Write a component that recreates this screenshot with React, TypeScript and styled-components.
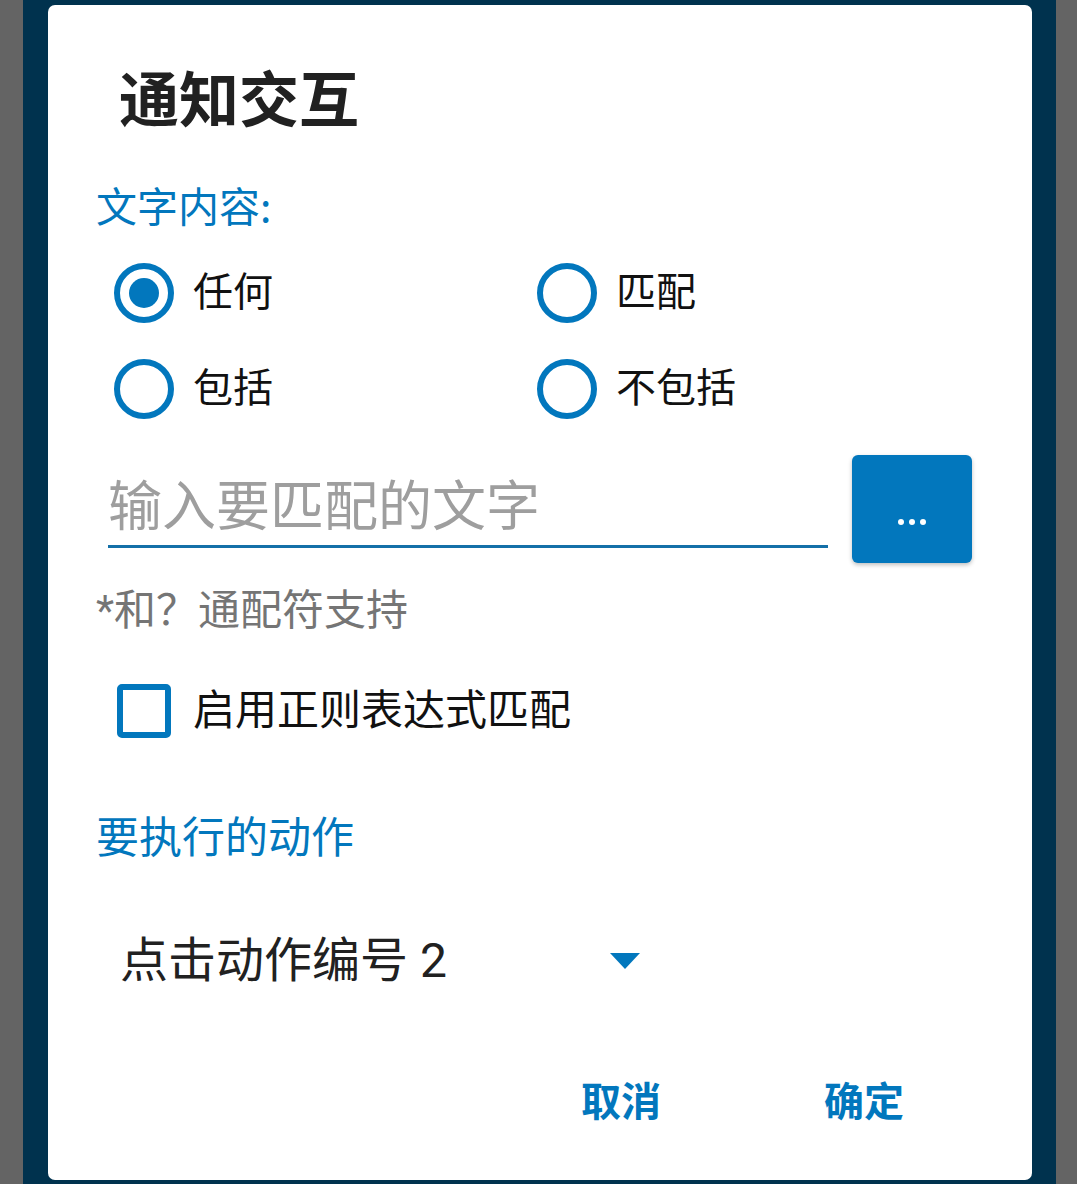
import React, { useState } from "react";
import styled, { createGlobalStyle } from "styled-components";

const GlobalStyle = createGlobalStyle`
  html, body { margin: 0; padding: 0; background: #646464; }
  body { font-family: Roboto, "Noto Sans CJK SC", sans-serif; }
  * { box-sizing: border-box; }
`;

const BLUE = "#0277bd";

const Page = styled.div`
  width: 1077px;
  height: 1184px;
  background: #646464;
  padding-left: 23px;
  overflow: hidden;
`;

const Scrim = styled.div`
  width: 1033px;
  height: 1184px;
  background: #00324e;
  padding: 5px 0 0 25px;
`;

const Dialog = styled.div`
  width: 984px;
  height: 1175px;
  background: #ffffff;
  border-radius: 7px;
  display: flex;
  flex-direction: column;
`;

const Title = styled.div`
  margin-top: 62px;
  padding-left: 71px;
  height: 70px;
  line-height: 70px;
  font-size: 60px;
  font-weight: 700;
  color: #212121;
`;

const SectionLabel = styled.div<{ $mt: number; $size: number }>`
  margin-top: ${(p) => p.$mt}px;
  padding-left: 48px;
  height: 50px;
  line-height: 50px;
  font-family: "Noto Sans CJK SC", sans-serif;
  font-size: ${(p) => p.$size}px;
  color: ${BLUE};
`;

const RadioGrid = styled.div`
  margin-top: 16px;
  padding-left: 66px;
  display: grid;
  grid-template-columns: 423px 423px;
  grid-auto-rows: 96px;
`;

const RadioItem = styled.label`
  display: flex;
  align-items: center;
  gap: 19px;
  cursor: pointer;
`;

const RadioCircle = styled.span<{ $on: boolean }>`
  width: 60px;
  height: 60px;
  border-radius: 50%;
  border: 6px solid ${BLUE};
  display: flex;
  align-items: center;
  justify-content: center;
  &::after {
    content: "";
    width: 30px;
    height: 30px;
    border-radius: 50%;
    background: ${BLUE};
    display: ${(p) => (p.$on ? "block" : "none")};
  }
`;

const OptionText = styled.span`
  font-size: 40px;
  line-height: 50px;
  color: #111111;
`;

const InputRow = styled.div`
  margin-top: 18px;
  padding: 0 60px;
  display: flex;
  align-items: flex-start;
  gap: 24px;
`;

const TextInput = styled.input`
  margin-top: 10px;
  flex: 1;
  height: 83px;
  border: none;
  border-bottom: 3px solid #1470a8;
  outline: none;
  padding: 4px 0 0 0;
  font-family: Roboto, "Noto Sans CJK SC", sans-serif;
  font-size: 54px;
  line-height: 76px;
  color: #212121;
  background: transparent;
  &::placeholder { color: #9e9e9e; }
`;

const MoreButton = styled.button`
  width: 120px;
  height: 108px;
  border: none;
  border-radius: 6px;
  background: ${BLUE};
  box-shadow: 0 2px 4px rgba(0, 0, 0, 0.25);
  display: flex;
  align-items: center;
  justify-content: center;
  padding: 26px 0 0 0;
  cursor: pointer;
`;

const Helper = styled.div`
  margin-top: 23px;
  padding-left: 48px;
  height: 50px;
  line-height: 50px;
  font-size: 42px;
  color: #757575;
`;

const CheckRow = styled.label`
  margin-top: 35px;
  padding-left: 69px;
  height: 80px;
  display: flex;
  align-items: center;
  gap: 22px;
  cursor: pointer;
`;

const CheckBox = styled.span<{ $on: boolean }>`
  width: 54px;
  height: 54px;
  border: 6px solid ${BLUE};
  border-radius: 5px;
  background: ${(p) => (p.$on ? BLUE : "transparent")};
`;

const CheckText = styled.span`
  font-size: 42px;
  line-height: 50px;
  color: #111111;
`;

const Spinner = styled.div`
  margin-top: 52px;
  padding-left: 72px;
  height: 100px;
  display: flex;
  align-items: center;
  width: 592px;
  justify-content: space-between;
`;

const SpinnerText = styled.span`
  font-size: 48px;
  line-height: 56px;
  color: #212121;
`;

const Actions = styled.div`
  margin-top: 48px;
  height: 80px;
  display: flex;
  justify-content: flex-end;
  padding-right: 88px;
  gap: 83px;
`;

const ActionButton = styled.button`
  border: none;
  background: transparent;
  padding: 0 40px;
  height: 80px;
  font-family: Roboto, "Noto Sans CJK SC", sans-serif;
  font-size: 40px;
  font-weight: 700;
  color: ${BLUE};
  cursor: pointer;
`;

const options = ["任何", "匹配", "包括", "不包括"];

export default function App() {
  const [sel, setSel] = useState(0);
  const [regex, setRegex] = useState(false);
  const [text, setText] = useState("");
  return (
    <Page>
      <GlobalStyle />
      <Scrim>
        <Dialog>
          <Title>通知交互</Title>
          <SectionLabel $mt={42} $size={41}>文字内容:</SectionLabel>
          <RadioGrid>
            {options.map((o, i) => (
              <RadioItem key={o} onClick={() => setSel(i)}>
                <RadioCircle $on={sel === i} />
                <OptionText>{o}</OptionText>
              </RadioItem>
            ))}
          </RadioGrid>
          <InputRow>
            <TextInput
              placeholder="输入要匹配的文字"
              value={text}
              onChange={(e) => setText(e.target.value)}
            />
            <MoreButton aria-label="more">
              <svg width="30" height="8" viewBox="0 0 30 8">
                <circle cx="4" cy="4" r="3" fill="#fff" />
                <circle cx="15" cy="4" r="3" fill="#fff" />
                <circle cx="26" cy="4" r="3" fill="#fff" />
              </svg>
            </MoreButton>
          </InputRow>
          <Helper>*和？通配符支持</Helper>
          <CheckRow onClick={() => setRegex(!regex)}>
            <CheckBox $on={regex} />
            <CheckText>启用正则表达式匹配</CheckText>
          </CheckRow>
          <SectionLabel $mt={58} $size={43}>要执行的动作</SectionLabel>
          <Spinner>
            <SpinnerText>点击动作编号 2</SpinnerText>
            <svg width="30" height="16" viewBox="0 0 30 16">
              <polygon points="0,0 30,0 15,16" fill={BLUE} />
            </svg>
          </Spinner>
          <Actions>
            <ActionButton>取消</ActionButton>
            <ActionButton>确定</ActionButton>
          </Actions>
        </Dialog>
      </Scrim>
    </Page>
  );
}
